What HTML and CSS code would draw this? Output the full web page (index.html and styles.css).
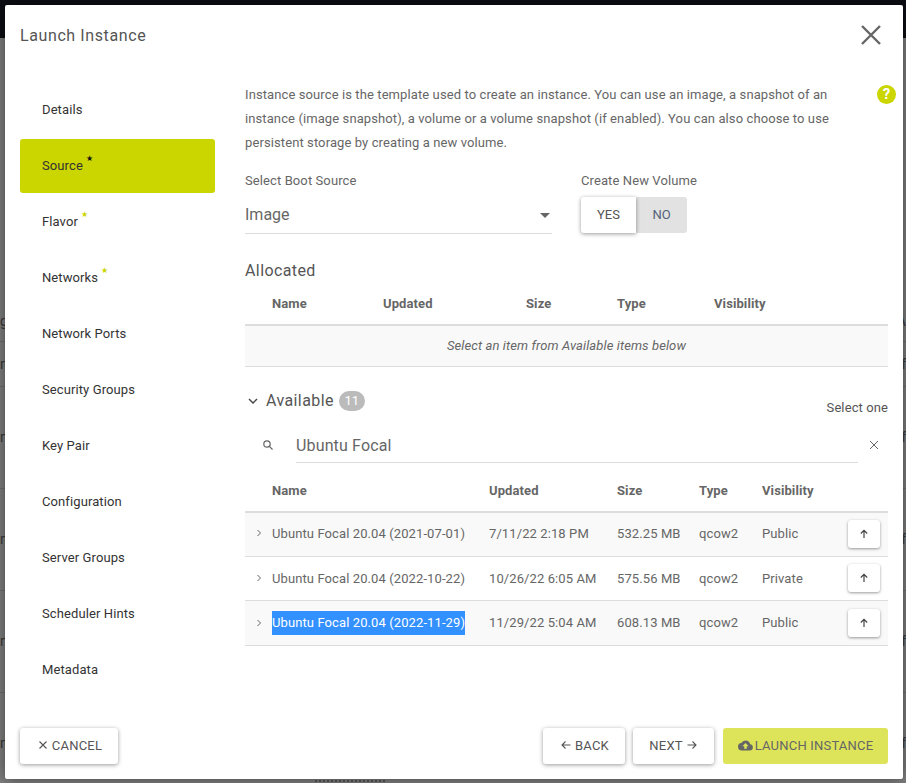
FILE: index.html
```html
<!DOCTYPE html>
<html lang="en">
<head>
    <meta charset="UTF-8">
    <meta name="viewport" content="width=device-width, initial-scale=1.0">
    <title>Launch Instance</title>
    <link rel="stylesheet" href="styles.css">
</head>
<body>
    <div class="backdrop">
        <div class="nav"></div>
        <div class="bg-row bg-row-a"><span>ge</span><span>A</span></div>
        <div class="bg-row bg-row-b"><span>nt</span><span>f</span></div>
        <div class="bg-row bg-row-c"><span>nt</span><span>f</span></div>
        <div class="bg-row bg-row-c"><span>nt</span><span>f</span></div>
        <div class="bg-row bg-row-c"><span>nt</span><span>f</span></div>
        <div class="bg-row bg-row-c"><span>nt</span><span>f</span></div>
        <div class="bg-foot"></div>
    </div>

    <div class="modal">
        <div class="modal-head">
            <h1>Launch Instance</h1>
            <svg class="close" viewBox="0 0 24 24"><path d="M3 3 L21 21 M21 3 L3 21"/></svg>
        </div>

        <div class="modal-body">
            <ul class="steps">
                <li>Details</li>
                <li class="active">Source<i>&#9733;</i></li>
                <li>Flavor<i>&#9733;</i></li>
                <li>Networks<i>&#9733;</i></li>
                <li>Network Ports</li>
                <li>Security Groups</li>
                <li>Key Pair</li>
                <li>Configuration</li>
                <li>Server Groups</li>
                <li>Scheduler Hints</li>
                <li>Metadata</li>
            </ul>

            <div class="content">
                <div class="help">?</div>
                <p class="intro">Instance source is the template used to create an instance. You can use an image, a snapshot of an instance (image snapshot), a volume or a volume snapshot (if enabled). You can also choose to use persistent storage by creating a new volume.</p>

                <div class="source-row">
                    <div class="boot">
                        <label>Select Boot Source</label>
                        <div class="select">Image<b></b></div>
                    </div>
                    <div class="volume">
                        <label>Create New Volume</label>
                        <div class="toggle"><span class="on">YES</span><span class="off">NO</span></div>
                    </div>
                </div>

                <h2 class="allocated">Allocated</h2>
                <table class="list alloc">
                    <tr>
                        <th class="c1"></th><th class="c2">Name</th><th class="c3">Updated</th><th class="c4">Size</th><th class="c5">Type</th><th>Visibility</th>
                    </tr>
                    <tr class="empty"><td colspan="6">Select an item from Available items below</td></tr>
                </table>

                <div class="avail-head">
                    <svg class="chev" viewBox="0 0 12 12"><path d="M2 4 L6 8 L10 4"/></svg>
                    <h2>Available</h2>
                    <span class="count">11</span>
                    <span class="select-one">Select one</span>
                </div>

                <div class="search">
                    <svg class="mag" viewBox="0 0 12 12"><circle cx="5" cy="5" r="3.2"/><path d="M7.4 7.4 L10.5 10.5"/></svg>
                    <div class="search-input">Ubuntu Focal</div>
                    <svg class="clear" viewBox="0 0 12 12"><path d="M2 2 L10 10 M10 2 L2 10"/></svg>
                </div>

                <table class="list avail">
                    <tr>
                        <th class="c1"></th><th class="c2">Name</th><th class="c3">Updated</th><th class="c4">Size</th><th class="c5">Type</th><th class="c6">Visibility</th><th></th>
                    </tr>
                    <tr class="odd first">
                        <td class="exp"><svg viewBox="0 0 8 8"><path d="M2.5 1 L5.5 4 L2.5 7"/></svg></td>
                        <td>Ubuntu Focal 20.04 (2021-07-01)</td><td>7/11/22 2:18 PM</td><td>532.25 MB</td><td>qcow2</td><td>Public</td>
                        <td class="act"><button class="up"><svg viewBox="0 0 12 12"><path d="M6 10 V2.5 M2.8 5.5 L6 2.3 L9.2 5.5"/></svg></button></td>
                    </tr>
                    <tr>
                        <td class="exp"><svg viewBox="0 0 8 8"><path d="M2.5 1 L5.5 4 L2.5 7"/></svg></td>
                        <td>Ubuntu Focal 20.04 (2022-10-22)</td><td>10/26/22 6:05 AM</td><td>575.56 MB</td><td>qcow2</td><td>Private</td>
                        <td class="act"><button class="up"><svg viewBox="0 0 12 12"><path d="M6 10 V2.5 M2.8 5.5 L6 2.3 L9.2 5.5"/></svg></button></td>
                    </tr>
                    <tr class="odd">
                        <td class="exp"><svg viewBox="0 0 8 8"><path d="M2.5 1 L5.5 4 L2.5 7"/></svg></td>
                        <td><span class="picked">Ubuntu Focal 20.04 (2022-11-29)</span></td><td>11/29/22 5:04 AM</td><td>608.13 MB</td><td>qcow2</td><td>Public</td>
                        <td class="act"><button class="up"><svg viewBox="0 0 12 12"><path d="M6 10 V2.5 M2.8 5.5 L6 2.3 L9.2 5.5"/></svg></button></td>
                    </tr>
                </table>
            </div>
        </div>

        <div class="modal-foot">
            <button class="btn cancel"><svg viewBox="0 0 12 12"><path d="M2.5 2.5 L9.5 9.5 M9.5 2.5 L2.5 9.5"/></svg>CANCEL</button>
            <div class="foot-right">
                <button class="btn back"><svg viewBox="0 0 12 12"><path d="M10.5 6 H2 M5.5 2.5 L2 6 L5.5 9.5"/></svg>BACK</button>
                <button class="btn next">NEXT<svg viewBox="0 0 12 12"><path d="M1.5 6 H10 M6.5 2.5 L10 6 L6.5 9.5"/></svg></button>
                <button class="btn launch"><svg viewBox="0 0 24 24"><path d="M19.35 10.04A7.49 7.49 0 0 0 12 4a7.5 7.5 0 0 0-6.65 4.04A6 6 0 0 0 6 20h13a5 5 0 0 0 .35-9.96zM14 13v4h-4v-4H7l5-5 5 5h-3z"/></svg>LAUNCH INSTANCE</button>
            </div>
        </div>
    </div>
</body>
</html>
```

FILE: styles.css
```css
* {
    box-sizing: border-box;
}

body {
    margin: 0;
    height: 783px;
    overflow: hidden;
    background-color: #808080;
    font-family: "Roboto", sans-serif;
    font-size: 13px;
    color: #555;
}

/* page behind the dialog */
.backdrop {
    position: absolute;
    inset: 0;
    color: #3a3a3a;
}

.nav {
    height: 38px;
    background-color: #0c0e14;
    margin-bottom: 266px;
}

.bg-row {
    display: flex;
    justify-content: space-between;
    border-bottom: 1px solid #707070;
    font-size: 14px;
}

.bg-row span {
    line-height: 24px;
}

.bg-row-a {
    height: 38px;
    padding-top: 5px;
}

.bg-row-b {
    height: 45px;
    padding-top: 10px;
}

.bg-row-c {
    height: 102px;
    padding-top: 38px;
}

/* tops of a line of text, the rest is under the dialog */
.bg-foot {
    position: absolute;
    left: 315px;
    top: 780px;
    width: 70px;
    border-top: 2px dotted #555;
}

.modal {
    position: absolute;
    left: 5px;
    top: 5px;
    width: 898px;
    height: 774px;
    background-color: #fff;
    border-radius: 2px;
    box-shadow: 0 0 16px rgba(0, 0, 0, 0.5);
    display: flex;
    flex-direction: column;
}

.modal-head {
    height: 76px;
    display: flex;
    justify-content: space-between;
    padding: 20px 20px 0 15px;
}

h1 {
    margin: 0;
    padding-top: 1px;
    font-size: 16px;
    font-weight: 400;
    letter-spacing: 0.6px;
    line-height: 20px;
    color: #555;
}

.close {
    width: 24px;
    height: 24px;
    margin-top: -2px;
    fill: none;
    stroke: #666;
    stroke-width: 2.4;
}

.modal-body {
    flex: 1;
    display: flex;
    min-height: 0;
    padding-left: 15px;
}

.steps {
    list-style: none;
    margin: 0;
    padding: 2px 0 0;
    width: 195px;
    flex: none;
    color: #333;
}

.steps li {
    height: 54px;
    margin-bottom: 2px;
    padding-left: 22px;
    line-height: 53px;
    border-radius: 3px;
    letter-spacing: 0.1px;
}

.steps li.active {
    background-color: #cbd500;
}

.steps i {
    font-style: normal;
    font-size: 8px;
    color: #cbd500;
    position: relative;
    top: -9px;
    left: 3px;
}

.steps li.active i {
    color: #111;
}

.content {
    position: relative;
    width: 643px;
    margin-left: 30px;
}

.help {
    position: absolute;
    right: -8px;
    top: 4px;
    width: 19px;
    height: 19px;
    border-radius: 50%;
    background-color: #cbd500;
    color: #fff;
    font-weight: 700;
    font-size: 15px;
    line-height: 19px;
    text-align: center;
}

.intro {
    margin: 0;
    padding-top: 2px;
    line-height: 24px;
    width: 600px;
    color: #666;
    letter-spacing: 0.1px;
}

.source-row {
    display: flex;
    margin-top: 17px;
}

.boot {
    width: 307px;
    margin-right: 29px;
}

label {
    display: block;
    line-height: 18px;
    color: #666;
    letter-spacing: 0.1px;
}

.select {
    position: relative;
    margin-top: 7px;
    height: 37px;
    line-height: 36px;
    font-size: 16px;
    color: #666;
    border-bottom: 1px solid #ddd;
}

.select b {
    position: absolute;
    right: 2px;
    top: 16px;
    border-left: 5px solid transparent;
    border-right: 5px solid transparent;
    border-top: 5px solid #666;
}

.toggle {
    display: flex;
    margin-top: 7px;
    height: 36px;
    line-height: 36px;
    text-align: center;
    color: #555;
}

.toggle .on {
    width: 55px;
    background-color: #fff;
    border-radius: 3px 0 0 3px;
    box-shadow: 0 1px 4px rgba(0, 0, 0, 0.4);
    position: relative;
}

.toggle .off {
    width: 51px;
    background-color: #e2e2e2;
    border-radius: 0 3px 3px 0;
    color: #54627a;
}

h2 {
    margin: 0;
    font-size: 16px;
    font-weight: 400;
    color: #555;
    letter-spacing: 0.4px;
}

.allocated {
    margin-top: 26px;
    line-height: 22px;
}

.list {
    width: 100%;
    border-collapse: collapse;
    table-layout: fixed;
    color: #666;
}

.list th {
    text-align: left;
    font-weight: 700;
    padding: 0;
    border-bottom: 2px solid #ddd;
    letter-spacing: 0.1px;
}

.alloc th {
    height: 43px;
}

.alloc .c1 {
    width: 27px;
}

.alloc .c2 {
    width: 111px;
}

.alloc .c3 {
    width: 143px;
}

.alloc .c4 {
    width: 91px;
}

.alloc .c5 {
    width: 97px;
}

.empty td {
    height: 41px;
    background-color: #f9f9f9;
    border-bottom: 1px solid #ddd;
    text-align: center;
    font-style: italic;
    color: #666;
    letter-spacing: 0.1px;
}

.avail-head {
    display: flex;
    align-items: center;
    margin-top: 22px;
    height: 24px;
}

.chev {
    width: 12px;
    height: 12px;
    margin: 0 7px 0 2px;
    fill: none;
    stroke: #444;
    stroke-width: 1.4;
}

.count {
    margin-left: 5px;
    width: 26px;
    height: 20px;
    border-radius: 10px;
    background-color: #bbb;
    color: #fff;
    text-align: center;
    line-height: 20px;
}

.select-one {
    margin-left: auto;
    position: relative;
    top: 7px;
    color: #555;
    letter-spacing: 0.1px;
}

.search {
    display: flex;
    align-items: center;
    margin-top: 15px;
    height: 35px;
}

.mag {
    width: 12px;
    height: 12px;
    margin-left: 17px;
    fill: none;
    stroke: #666;
    stroke-width: 1.2;
}

.search-input {
    width: 562px;
    margin-left: 22px;
    height: 35px;
    line-height: 36px;
    font-size: 16px;
    letter-spacing: 0.15px;
    color: #666;
    border-bottom: 1px solid #ddd;
}

.clear {
    width: 12px;
    height: 12px;
    margin-left: 10px;
    fill: none;
    stroke: #666;
    stroke-width: 1;
}

.avail th {
    height: 49px;
    padding-top: 7px;
}

.avail .c1 {
    width: 27px;
}

.avail .c2 {
    width: 217px;
}

.avail .c3 {
    width: 128px;
}

.avail .c4 {
    width: 82px;
}

.avail .c5 {
    width: 63px;
}

.avail .c6 {
    width: 86px;
}

.avail td {
    height: 44.5px;
    padding: 0;
    border-bottom: 1px solid #ddd;
    letter-spacing: 0.1px;
    white-space: nowrap;
}

.avail tr.odd td {
    background-color: #f9f9f9;
}

.avail tr.first td:not(.act) {
    padding-bottom: 2px;
}

.exp svg {
    display: block;
    width: 8px;
    height: 8px;
    margin-left: 10px;
    fill: none;
    stroke: #666;
    stroke-width: 1;
}

.picked {
    display: inline-block;
    line-height: 24px;
    background-color: #3390ff;
    color: #fff;
}

.up {
    display: block;
    width: 32px;
    height: 28px;
    padding: 0;
    border: 0;
    border-radius: 3px;
    background-color: #fff;
    box-shadow: 0 1px 3px rgba(0, 0, 0, 0.4);
}

.up svg {
    display: block;
    width: 12px;
    height: 12px;
    margin: auto;
    fill: none;
    stroke: #444;
    stroke-width: 1.2;
}

.modal-foot {
    display: flex;
    justify-content: space-between;
    padding: 0 15px 15px;
}

.foot-right {
    display: flex;
}

.btn {
    display: flex;
    align-items: center;
    justify-content: center;
    height: 36px;
    padding: 0 0 2px;
    border: 0;
    border-radius: 3px;
    background-color: #fff;
    box-shadow: 0 1px 4px rgba(0, 0, 0, 0.4);
    font-family: inherit;
    font-size: 13px;
    letter-spacing: 0.2px;
    color: #555;
}

.btn svg {
    width: 12px;
    height: 12px;
    fill: none;
    stroke: #555;
    stroke-width: 1.1;
}

.cancel {
    width: 98px;
    padding-left: 1px;
}

.cancel svg {
    margin-right: 3px;
}

.back {
    width: 82px;
    margin-right: 8px;
    padding-left: 1px;
}

.back svg {
    margin-right: 3px;
}

.next {
    width: 81px;
    margin-right: 9px;
}

.next svg {
    margin-left: 3px;
}

.launch {
    width: 165px;
    background-color: #dde45a;
    box-shadow: none;
    color: #666;
}

.launch svg {
    width: 15px;
    height: 15px;
    margin-right: 2px;
    fill: #666;
    stroke: none;
}
```
